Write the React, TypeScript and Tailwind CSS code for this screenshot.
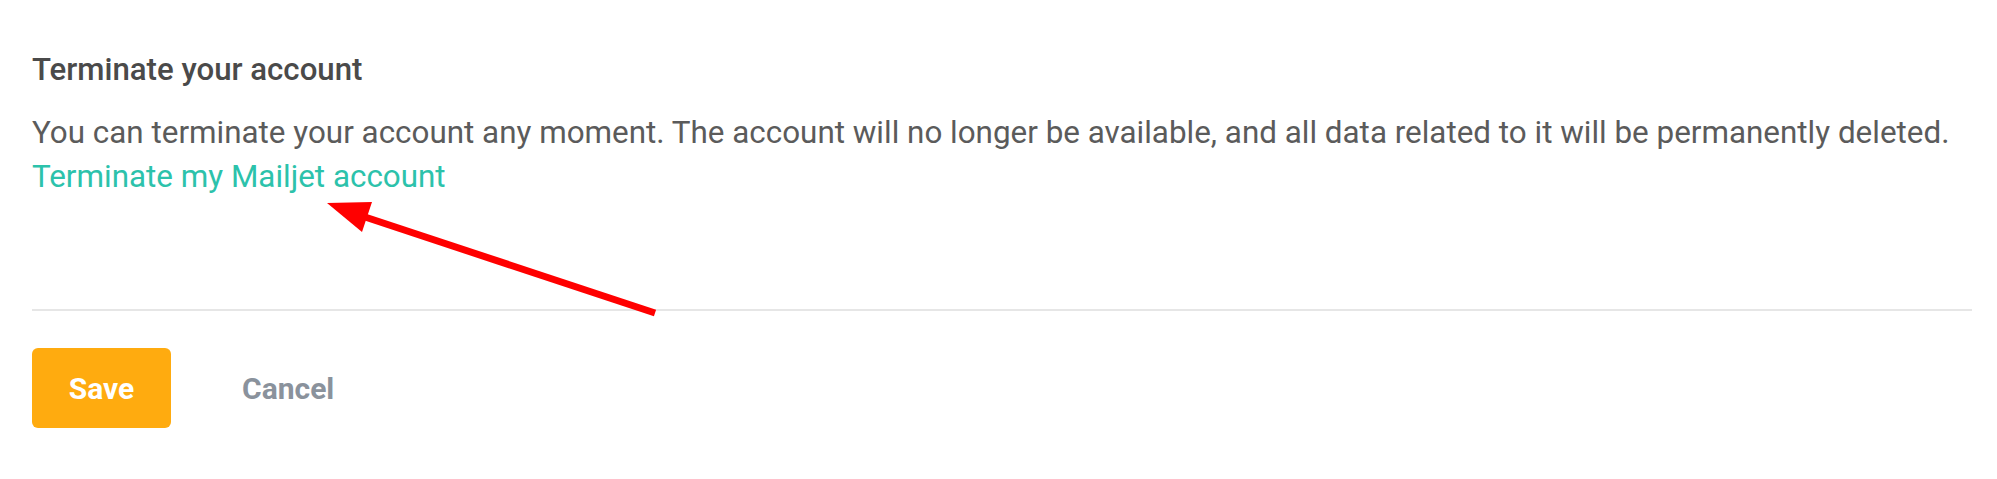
import React from "react";

export default function App() {
  return (
    <div className="relative w-full h-[479px] bg-white overflow-hidden" style={{ fontFamily: "Roboto, 'Liberation Sans', sans-serif" }}>
      <div className="pl-[32px] pr-[25px] pt-[54px]">
        <h2 className="text-[31.2px] leading-[31px] font-medium text-[#4a4a4a]">Terminate your account</h2>
        <p className="mt-[26px] text-[31.4px] leading-[44px] text-[#5b5b5b] whitespace-nowrap">
          You can terminate your account any moment. The account will no longer be available, and all data related to it will be permanently deleted.
          <br />
          <a href="#" className="text-[#2cc2ab]">Terminate my Mailjet account</a>
        </p>
        <div className="mt-[110px] h-[2px] bg-[#e6e6e6]" />
        <div className="mt-[37px] flex items-center">
          <button className="w-[139px] h-[80px] rounded-[6px] bg-[#ffab0f] text-white text-[30px] font-bold">Save</button>
          <button className="ml-[71px] text-[30px] font-bold text-[#8a929c]">Cancel</button>
        </div>
      </div>
      <svg className="absolute left-0 top-0 pointer-events-none" width="1997" height="479" viewBox="0 0 1997 479">
        <line x1="655" y1="313" x2="362" y2="216" stroke="#ff0000" strokeWidth="7" />
        <polygon points="327,203 372,202 362,232" fill="#ff0000" />
      </svg>
    </div>
  );
}
